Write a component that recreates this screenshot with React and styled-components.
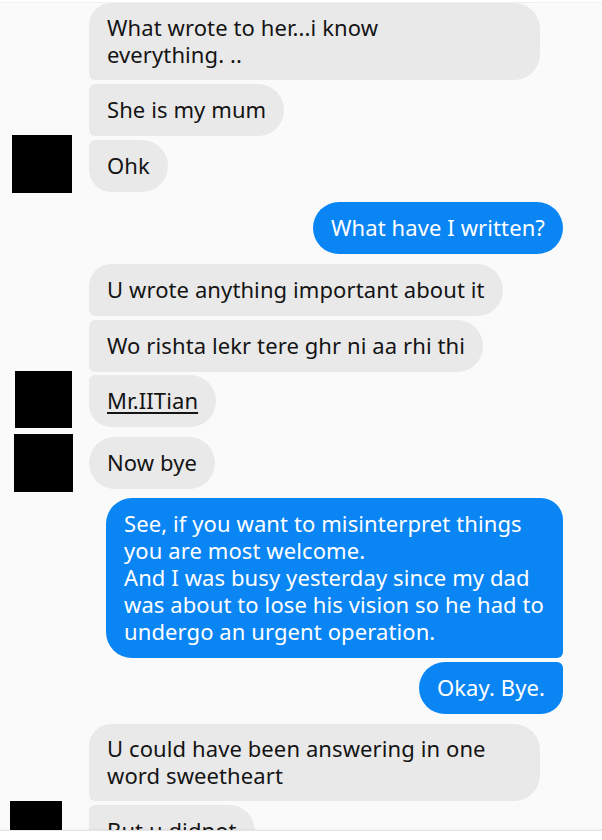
import React from 'react';
import styled, { createGlobalStyle } from 'styled-components';

const GlobalStyle = createGlobalStyle`
  html, body {
    margin: 0;
    padding: 0;
    background: #fafafa;
  }
  body {
    font-family: "Noto Sans", "Open Sans", sans-serif;
    -webkit-font-smoothing: antialiased;
  }
`;

const Screen = styled.div`
  width: 602px;
  height: 840px;
  overflow: hidden;
  position: relative;
  background: #fafafa;
  display: flex;
  flex-direction: column;
`;

const TopEdge = styled.div`
  height: 2px;
  background: #ffffff;
  border-bottom: 1px solid #f0f0f0;
  flex-shrink: 0;
`;

const Thread = styled.div`
  flex: 1;
  overflow: hidden;
  display: flex;
  flex-direction: column;
  padding-right: 39px;
`;

const Row = styled.div`
  display: flex;
  align-items: center;
  justify-content: ${p => (p.$mine ? 'flex-end' : 'flex-start')};
  margin-top: ${p => p.$gap ?? 4}px;
  flex-shrink: 0;
  position: relative;
`;

const AvatarSlot = styled.div`
  width: 89px;
  flex-shrink: 0;
  align-self: stretch;
  position: relative;
`;

const Redacted = styled.div`
  position: absolute;
  background: #000;
`;

const radii = {
  single: [26, 26],
  first: [22, 6],
  mid: [6, 6],
  last: [6, 22],
};

const Bubble = styled.div`
  box-sizing: border-box;
  padding: ${p => (p.$compact ? '11px 18px 12px' : '12px 18px 13px')};
  font-size: 22px;
  line-height: 27px;
  letter-spacing: 0.1px;
  color: ${p => (p.$mine ? '#ffffff' : '#141414')};
  background: ${p => (p.$mine ? '#0a85f4' : '#e9e9e9')};
  width: ${p => (p.$width ? `${p.$width}px` : 'auto')};
  white-space: nowrap;
  ${p => {
    const [top, bottom] = radii[p.$pos || 'single'];
    return p.$mine
      ? `border-radius: 26px ${top}px ${bottom}px 26px;`
      : `border-radius: ${top}px 26px 26px ${bottom}px;`;
  }}
`;

const Link = styled.span`
  text-decoration: underline;
  text-underline-offset: 3px;
  text-decoration-thickness: 1.5px;
`;

const BottomBar = styled.div`
  position: absolute;
  left: 0;
  right: 0;
  bottom: 0;
  height: 9px;
  background: #ffffff;
  border-top: 1px solid #e4e4e4;
  box-shadow: 0 -1px 2px rgba(0, 0, 0, 0.04);
`;

const Theirs = ({ gap, pos, width, compact, box, children }) => (
  <Row $gap={gap}>
    <AvatarSlot>
      {box && (
        <Redacted
          style={{ left: box[0], top: box[1], width: box[2], height: box[3] }}
        />
      )}
    </AvatarSlot>
    <Bubble $pos={pos} $width={width} $compact={compact}>
      {children}
    </Bubble>
  </Row>
);

const Mine = ({ gap, pos, width, children }) => (
  <Row $mine $gap={gap}>
    <Bubble $mine $pos={pos} $width={width}>
      {children}
    </Bubble>
  </Row>
);

export default function App() {
  return (
    <>
      <GlobalStyle />
      <Screen>
        <TopEdge />
        <Thread>
          <Theirs gap={0} pos="first" width={451} compact>
            What wrote to her...i know
            <br />
            everything. ..
          </Theirs>
          <Theirs pos="mid">She is my mum</Theirs>
          <Theirs pos="last" box={[12, -5, 60, 58]}>
            Ohk
          </Theirs>

          <Mine gap={10}>What have I written?</Mine>

          <Theirs gap={10} pos="first">
            U wrote anything important about it
          </Theirs>
          <Theirs pos="mid">Wo rishta lekr tere ghr ni aa rhi thi</Theirs>
          <Theirs gap={3} pos="last" box={[15, -4, 57, 57]}>
            <Link>Mr.IITian</Link>
          </Theirs>
          <Theirs gap={10} box={[14, -3, 59, 58]}>
            Now bye
          </Theirs>

          <Mine gap={9} pos="first" width={457}>
            See, if you want to misinterpret things
            <br />
            you are most welcome.
            <br />
            And I was busy yesterday since my dad
            <br />
            was about to lose his vision so he had to
            <br />
            undergo an urgent operation.
          </Mine>
          <Mine pos="last">Okay. Bye.</Mine>

          <Theirs gap={10} pos="first" width={451} compact>
            U could have been answering in one
            <br />
            word sweetheart
          </Theirs>
          <Theirs pos="mid" box={[10, -4, 52, 60]}>
            But u didnot
          </Theirs>
        </Thread>
        <BottomBar />
      </Screen>
    </>
  );
}
